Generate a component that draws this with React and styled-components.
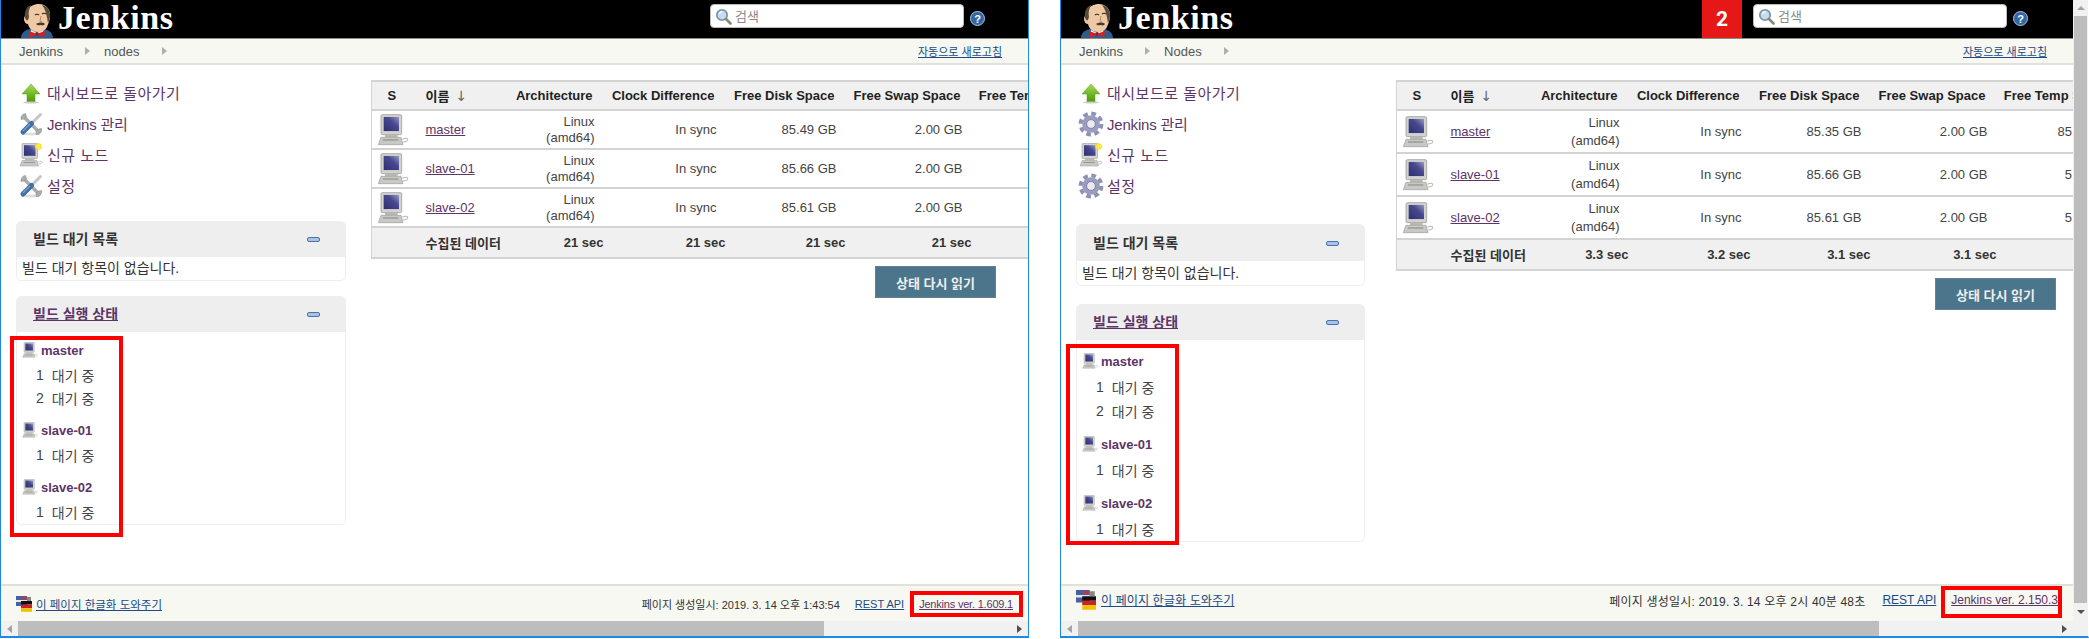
import React from 'react'
import styled, { createGlobalStyle } from 'styled-components'

const FONT = `"Liberation Sans", "Noto Sans CJK KR", Arial, sans-serif`

const GlobalStyle = createGlobalStyle`
  html, body {
    margin: 0;
    padding: 0;
    background: #fff;
  }
  body {
    font-family: ${FONT};
    color: #333;
  }
`

const Page = styled.div`
  display: flex;
  gap: 31px;
  width: 2089px;
  height: 639px;
  overflow: hidden;
`

const Window = styled.div`
  position: relative;
  display: flex;
  flex-direction: column;
  box-sizing: border-box;
  flex: none;
  width: 1029px;
  height: 638px;
  border-left: 1.5px solid #1e88e5;
  border-right: ${p => (p.$edge ? '1.5px solid #1e88e5' : '1px solid #fff')};
  border-bottom: 2px solid #1e88e5;
`

const Viewport = styled.div`
  flex: 1;
  min-height: 0;
  display: flex;
`

const Pane = styled.div`
  flex: 1;
  min-width: 0;
  display: flex;
  flex-direction: column;
`

const Header = styled.header`
  flex: none;
  height: 38px;
  background: #000;
  border-bottom: 1px solid #8c8c84;
  display: flex;
  align-items: stretch;
  overflow: hidden;
`

const Logo = styled.div`
  display: flex;
  align-items: flex-end;
  padding-left: 19px;
  margin-right: auto;
`

const LogoText = styled.span`
  font-family: "Liberation Serif", serif;
  font-weight: 700;
  font-size: 34px;
  letter-spacing: 0.6px;
  line-height: 35px;
  color: #fff;
  align-self: flex-start;
  margin-left: 4px;
`

const Badge = styled.div`
  width: 40px;
  margin-right: 11px;
  background: #e51717;
  color: #fff;
  font-family: Roboto, sans-serif;
  font-weight: 700;
  font-size: 21px;
  display: flex;
  align-items: center;
  justify-content: center;
`

const SearchBox = styled.div`
  box-sizing: border-box;
  width: 254px;
  height: 24px;
  margin-top: 4px;
  padding: 0 4px;
  background: #fff;
  border: 1px solid #bbb;
  border-radius: 4px;
  display: flex;
  align-items: center;
  gap: 3px;
`

const SearchInput = styled.input`
  flex: 1;
  min-width: 0;
  border: 0;
  outline: 0;
  padding: 0;
  background: transparent;
  font-family: ${FONT};
  font-size: 13px;
  &::placeholder {
    color: #8a8a8a;
    opacity: 1;
  }
`

const HelpWrap = styled.div`
  display: flex;
  align-items: center;
  margin: 0 ${p => p.$right}px 2px 6px;
`

const Breadcrumbs = styled.nav`
  flex: none;
  height: 24px;
  padding: 0 26px 0 18px;
  background: #f6f8f1;
  border-bottom: 2px solid #dfe1da;
  display: flex;
  align-items: center;
  font-size: 13px;
  color: #555;
`

const Crumb = styled.span`
  margin-right: 22px;
`

const CrumbArrow = styled.i`
  width: 0;
  height: 0;
  margin-right: 14px;
  border-left: 5px solid #aeb0aa;
  border-top: 4px solid transparent;
  border-bottom: 4px solid transparent;
`

const RefreshLink = styled.a`
  margin-left: auto;
  font-size: 11px;
  color: #204a87;
  text-decoration: underline;
`

const Main = styled.main`
  flex: 1;
  min-height: 0;
  display: flex;
`

const Sidebar = styled.aside`
  flex: none;
  box-sizing: content-box;
  width: ${p => p.$width}px;
  padding: 12px 0 0 15px;
`

const Tasks = styled.ul`
  list-style: none;
  margin: 0;
  padding: 0 0 0 3px;
`

const Task = styled.li`
  height: 31px;
  display: flex;
  align-items: center;
  gap: 4px;
  font-size: 15px;
  letter-spacing: ${p => (p.$tight ? '-0.2px' : '0.5px')};
  color: #5c3566;
`

const Panel = styled.section`
  box-sizing: border-box;
  margin-top: ${p => p.$top}px;
  border: 1px solid #eee;
  border-radius: 5px;
  overflow: hidden;
`

const PanelHead = styled.div`
  box-sizing: border-box;
  height: ${p => p.$height}px;
  padding: 0 25px 3px 16px;
  background: #eee;
  display: flex;
  align-items: center;
  justify-content: space-between;
  font-size: 14px;
  font-weight: 700;
`

const PanelTitle = styled.span`
  color: ${p => (p.$link ? '#5c3566' : '#333')};
  text-decoration: ${p => (p.$link ? 'underline' : 'none')};
`

const Collapse = styled.i`
  box-sizing: border-box;
  width: 13px;
  height: 5px;
  margin-top: 3px;
  border: 1px solid #4a72ad;
  border-radius: 2px;
  background: #a9c2e6;
`

const EmptyNote = styled.div`
  box-sizing: border-box;
  height: ${p => p.$height}px;
  padding: 0 0 3px 5px;
  display: flex;
  align-items: center;
  font-size: 14px;
`

const Executors = styled.div`
  padding: ${p => (p.$roomy ? 9 : 6)}px 0 ${p => (p.$roomy ? 0 : 1)}px 5px;
`

const NodeGroup = styled.div`
  & + & {
    margin-top: ${p => (p.$roomy ? 9 : 8)}px;
  }
`

const NodeName = styled.div`
  height: 24px;
  margin-bottom: ${p => (p.$roomy ? 2 : 1)}px;
  display: flex;
  align-items: center;
  gap: 3px;
  font-size: 13px;
  font-weight: 700;
  color: #5c3566;
`

const ExecRow = styled.div`
  height: ${p => (p.$roomy ? 24 : 23)}px;
  padding-left: 14px;
  display: flex;
  align-items: center;
  gap: 8px;
  font-size: 14px;
  color: #444;
`

const Content = styled.div`
  flex: 1;
  min-width: 0;
  margin-left: ${p => p.$gap}px;
  padding-top: 15px;
  overflow: hidden;
`

const NodeTable = styled.table`
  table-layout: fixed;
  width: 726px;
  border-collapse: collapse;
  border-top: 2px solid #d3d3d3;
  border-left: 1px solid #d3d3d3;
  font-size: 13px;
  color: #444;
`

const Col = styled.col`
  width: ${p => p.$width}px;
`

const HeadRow = styled.tr`
  height: 29px;
  background: #f0f0f0;
  border-bottom: 2px solid #d3d3d3;
`

const HeadCell = styled.th`
  padding: 0 ${p => (p.$center ? 4 : 12)}px 0 ${p => (p.$left ? 10 : 0)}px;
  text-align: ${p => (p.$center ? 'center' : p.$left ? 'left' : 'right')};
  font-weight: 700;
  font-size: 13px;
  color: #222;
  white-space: nowrap;
`

const SortArrow = styled.span`
  margin-left: 6px;
  font-family: "DejaVu Sans", sans-serif;
  font-size: 14px;
  font-weight: 400;
  color: #666;
`

const BodyRow = styled.tr`
  height: ${p => p.$height}px;
  border-bottom: 2px solid #d3d3d3;
`

const Cell = styled.td`
  padding: 0 10px;
  text-align: ${p => (p.$left ? 'left' : 'right')};
  line-height: ${p => p.$lh || 16}px;
  white-space: nowrap;
`

const IconCell = styled.td`
  padding: 0;
  text-align: left;
  & > svg {
    display: block;
    margin-left: 5px;
  }
`

const NodeLink = styled.a`
  color: #5c3566;
  text-decoration: underline;
`

const TotalRow = styled.tr`
  height: 31px;
  background: #f0f0f0;
  border-bottom: 2px solid #d3d3d3;
`

const TotalCell = styled.td`
  padding: 0 ${p => (p.$left ? 0 : 1)}px 0 ${p => (p.$left ? 10 : 0)}px;
  text-align: ${p => (p.$left ? 'left' : 'right')};
  font-size: 13px;
  font-weight: 700;
  color: #333;
  white-space: nowrap;
`

const ButtonRow = styled.div`
  display: flex;
  justify-content: flex-end;
  padding: 7px ${p => p.$right}px 0 0;
`

const RefreshButton = styled.button`
  width: 121px;
  height: 32px;
  border: 1px solid #5f8299;
  background: #4b758b;
  color: #eee;
  font-family: ${FONT};
  font-size: 13px;
  font-weight: 700;
  padding: 0;
`

const Footer = styled.footer`
  flex: none;
  box-sizing: border-box;
  height: 37px;
  padding: 0 15px ${p => (p.$large ? 7 : 0)}px 15px;
  background: #f6f8f1;
  border-top: 2px solid #dfe1da;
  display: flex;
  align-items: center;
  gap: 15px;
  font-size: ${p => (p.$large ? 12 : 11)}px;
`

const Translate = styled.a`
  margin-right: auto;
  display: flex;
  align-items: center;
  gap: ${p => (p.$large ? 5 : 4)}px;
  font-size: ${p => (p.$large ? 12.2 : 11.5)}px;
  color: #204a87;
  text-decoration: underline;
`

const FooterDate = styled.span`
  margin-right: ${p => (p.$large ? 2 : 0)}px;
  letter-spacing: ${p => (p.$large ? '0.2px' : '0')};
`

const FooterLink = styled.a`
  color: ${p => (p.$visited ? '#5c3566' : '#204a87')};
  letter-spacing: ${p => (p.$tight ? '-0.2px' : '0')};
  text-decoration: underline;
`

const HScroll = styled.div`
  flex: none;
  height: 15px;
  padding-right: ${p => p.$corner}px;
  background: #f1f1f1;
  display: flex;
  align-items: stretch;
`

const ScrollButton = styled.div`
  flex: none;
  width: 17px;
  display: flex;
  align-items: center;
  justify-content: center;
`

const ArrowLeft = styled.i`
  width: 0;
  height: 0;
  border-right: 5px solid ${p => (p.$dim ? '#a3a3a3' : '#505050')};
  border-top: 4px solid transparent;
  border-bottom: 4px solid transparent;
`

const ArrowRight = styled.i`
  width: 0;
  height: 0;
  border-left: 5px solid #505050;
  border-top: 4px solid transparent;
  border-bottom: 4px solid transparent;
`

const Track = styled.div`
  flex: 1;
  display: flex;
`

const Thumb = styled.div`
  width: ${p => p.$size}px;
  background: #bdbdbd;
`

const VScroll = styled.div`
  flex: none;
  width: 15px;
  background: #f1f1f1;
  display: flex;
  flex-direction: column;
  align-items: center;
`

const VButton = styled.div`
  flex: none;
  height: ${p => p.$height}px;
  display: flex;
  align-items: center;
  justify-content: center;
`

const ArrowUpGlyph = styled.i`
  width: 0;
  height: 0;
  border-bottom: 4px solid #a3a3a3;
  border-left: 4px solid transparent;
  border-right: 4px solid transparent;
`

const ArrowDownGlyph = styled.i`
  width: 0;
  height: 0;
  border-top: 4px solid #505050;
  border-left: 4px solid transparent;
  border-right: 4px solid transparent;
`

const VThumb = styled.div`
  flex: 1;
  width: 13px;
  background: #bdbdbd;
`

/* annotation frames drawn over the screenshot */
const RedFrame = styled.div`
  position: absolute;
  box-sizing: border-box;
  left: ${p => p.$x}px;
  top: ${p => p.$y}px;
  width: ${p => p.$w}px;
  height: ${p => p.$h}px;
  border: 4px solid #f00;
  pointer-events: none;
`

function Butler () {
  return (
    <svg width='34' height='35' viewBox='0 0 34 35' style={{ display: 'block' }}>
      <path d='M1 35c0-5 4-8 9-9l7 2 7-2c5 1 9 4 9 9z' fill='#2d5c8f' />
      <path d='M11 27l6 3 6-3 1 5H10z' fill='#f4f4f0' />
      <path d='M9 28l7 2.5v1L10 35zM25 28l-7 2.5v1L24 35z' fill='#d5201f' />
      <circle cx='17' cy='31' r='1.8' fill='#a81515' />
      <path d='M8 8C9 3 14 1 19 1c6 0 11 4 11 11 0 6-2 9-3 12-2 4-6 5-9 5-5 0-9-3-10-8-2 0-4-2-4-5 0-2 1-4 3-4z' fill='#efc9a4' />
      <path d='M5 15c-1-6 1-11 6-13 -2 4-3 8-2 12l-1 3c-1 1-2 0-3-2zM22 2c5 1 8 5 8 10 0 3-1 6-2 8-1-6-2-13-6-18z' fill='#5a4a3c' />
      <path d='M16 21c3-2 7-2 9 0-1 1-2 2-4 1-2 0-3 1-5-1z' fill='#4a3a2c' />
      <path d='M15 12c1-1 3-1 4 0M22 11c1-1 3-1 4 0' stroke='#3a2a1c' strokeWidth='1.2' fill='none' />
      <path d='M21 13l-1 5 2 1' stroke='#b98a66' strokeWidth='1' fill='none' />
    </svg>
  )
}

function SearchIcon () {
  return (
    <svg width='17' height='17' viewBox='0 0 17 17'>
      <circle cx='7' cy='7' r='5.2' fill='#c6dcef' stroke='#7f96a8' strokeWidth='1.8' />
      <path d='M4.5 6a3 3 0 0 1 3-2.5' stroke='#fff' strokeWidth='1.2' fill='none' />
      <path d='M11 11l4.5 4.5' stroke='#8a8678' strokeWidth='2.6' strokeLinecap='round' />
    </svg>
  )
}

function HelpIcon () {
  return (
    <svg width='15' height='15' viewBox='0 0 15 15'>
      <circle cx='7.5' cy='7.5' r='7' fill='#3465a4' stroke='#a9c2e6' strokeWidth='1' />
      <text x='7.5' y='11.5' textAnchor='middle' fontSize='11' fontWeight='700' fontFamily='Liberation Sans, sans-serif' fill='#fff'>?</text>
    </svg>
  )
}

function UpArrowIcon () {
  return (
    <svg width='24' height='24' viewBox='0 0 24 24' style={{ flex: 'none' }}>
      <defs>
        <linearGradient id='upGreen' x1='0' y1='0' x2='0' y2='1'>
          <stop offset='0' stopColor='#a6dd55' />
          <stop offset='1' stopColor='#4a9a06' />
        </linearGradient>
      </defs>
      <path d='M12 3L3 13h5v8h8v-8h5z' fill='url(#upGreen)' stroke='#5a9a1a' strokeWidth='0.5' />
      <ellipse cx='12' cy='21.5' rx='8' ry='1' fill='#ccc' />
    </svg>
  )
}

function ToolsIcon () {
  return (
    <svg width='24' height='24' viewBox='0 0 24 24' style={{ flex: 'none' }}>
      <ellipse cx='12' cy='22' rx='10' ry='1.4' fill='#ddd' />
      <path d='M5 5l14 14' stroke='#a9adab' strokeWidth='3.6' />
      <path d='M6.5 1.5A5 5 0 0 0 2 7.5l3-.5 2.5-2.5zM17 22.5a5 5 0 0 0 5.6-6L19.5 17 17 19.5z' fill='#a9adab' stroke='#888' strokeWidth='0.5' />
      <path d='M21.5 2.5L14 10' stroke='#c4c7c5' strokeWidth='3' strokeLinecap='round' />
      <path d='M12.5 11.5L4 20' stroke='#3f6ea8' strokeWidth='5' strokeLinecap='round' />
      <path d='M11 12L4 19' stroke='#7ba0cd' strokeWidth='1.2' />
    </svg>
  )
}

function GearIcon () {
  return (
    <svg width='26' height='26' viewBox='0 0 26 26' style={{ flex: 'none', marginLeft: '-1px', marginRight: '-1px' }}>
      <circle cx='13' cy='13' r='10.4' fill='none' stroke='#8e90b4' strokeWidth='4' strokeDasharray='4.6 3.57' />
      <circle cx='13' cy='13' r='8.8' fill='#9a9cbf' />
      <circle cx='13' cy='13' r='4.4' fill='#eceaf0' stroke='#74769a' strokeWidth='0.8' />
    </svg>
  )
}

function ComputerIcon ({ size = 24, star }) {
  return (
    <svg width={size} height={size} viewBox='0 0 24 24' style={{ flex: 'none' }}>
      <defs>
        <linearGradient id='pcScreen' x1='0' y1='1' x2='1' y2='0'>
          <stop offset='0' stopColor='#2e2e72' />
          <stop offset='0.6' stopColor='#48488f' />
          <stop offset='1' stopColor='#9a9abf' />
        </linearGradient>
      </defs>
      <rect x='3' y='0.5' width='15.5' height='15' rx='1' fill='#d2d3cf' stroke='#9b9d98' strokeWidth='0.6' />
      <rect x='5' y='2.2' width='11.5' height='10.6' fill='url(#pcScreen)' />
      <rect x='6' y='15.5' width='9.5' height='2' fill='#b8bab5' />
      <path d='M3 17.5h15l1.5 5.5H1z' fill='#c8c9c4' stroke='#9b9d98' strokeWidth='0.5' />
      <path d='M4.5 19.5h11.5' stroke='#90928d' strokeWidth='0.9' />
      <path d='M19 19c2-1 3.5-1 4 0s-1 2-3.5 2' stroke='#b8bab5' strokeWidth='0.8' fill='none' />
      {star && <circle cx='19.5' cy='3.5' r='3' fill='#fce94f' stroke='#edd400' strokeWidth='0.6' />}
    </svg>
  )
}

function FlagIcon ({ size }) {
  return (
    <svg width={size} height={size} viewBox='0 0 16 16' style={{ flex: 'none' }}>
      <rect x='0' y='0' width='11' height='10' fill='#4a5f9e' />
      <rect x='0' y='4' width='11' height='2' fill='#e8e8e8' />
      <rect x='6' y='1' width='5' height='2' fill='#cc3333' />
      <rect x='5' y='5' width='11' height='3.6' fill='#111' />
      <rect x='5' y='8.6' width='11' height='3.6' fill='#cc2222' />
      <rect x='5' y='12.2' width='11' height='3.6' fill='#f2c200' />
      <rect x='11' y='1' width='4' height='4' fill='#888' />
    </svg>
  )
}

function NodeRow ({ name, disk, temp, height, lh }) {
  return (
    <BodyRow $height={height}>
      <IconCell><ComputerIcon size={32} /></IconCell>
      <Cell $left><NodeLink>{name}</NodeLink></Cell>
      <Cell $lh={lh}>Linux<br />(amd64)</Cell>
      <Cell>In sync</Cell>
      <Cell>{disk}</Cell>
      <Cell>2.00 GB</Cell>
      <Cell>{temp}</Cell>
    </BodyRow>
  )
}

function NodesTable ({ nodes, times, rowHeight, lineHeight }) {
  return (
    <NodeTable>
      <colgroup>
        {[44, 90, 99, 122, 120, 126, 125].map(w => <Col key={w} $width={w} />)}
      </colgroup>
      <thead>
        <HeadRow>
          <HeadCell $center>S</HeadCell>
          <HeadCell $left>이름<SortArrow>↓</SortArrow></HeadCell>
          <HeadCell>Architecture</HeadCell>
          <HeadCell>Clock Difference</HeadCell>
          <HeadCell>Free Disk Space</HeadCell>
          <HeadCell>Free Swap Space</HeadCell>
          <HeadCell>Free Temp Space</HeadCell>
        </HeadRow>
      </thead>
      <tbody>
        {nodes.map(n => (
          <NodeRow key={n.name} {...n} height={rowHeight} lh={lineHeight} />
        ))}
        <TotalRow>
          <TotalCell />
          <TotalCell $left>수집된 데이터</TotalCell>
          {times.map((t, i) => <TotalCell key={i}>{t}</TotalCell>)}
          <TotalCell>{times[0]}</TotalCell>
        </TotalRow>
      </tbody>
    </NodeTable>
  )
}

function ExecutorPanel ({ roomy }) {
  const groups = [
    { name: 'master', slots: [1, 2] },
    { name: 'slave-01', slots: [1] },
    { name: 'slave-02', slots: [1] }
  ]

  return (
    <Executors $roomy={roomy}>
      {groups.map(g => (
        <NodeGroup key={g.name} $roomy={roomy}>
          <NodeName $roomy={roomy}><ComputerIcon size={16} />{g.name}</NodeName>
          {g.slots.map(s => (
            <ExecRow key={s} $roomy={roomy}><span>{s}</span><span>대기 중</span></ExecRow>
          ))}
        </NodeGroup>
      ))}
    </Executors>
  )
}

function JenkinsWindow ({ v2 }) {
  const nodes = v2
    ? [
        { name: 'master', disk: '85.35 GB', temp: '85.35 GB' },
        { name: 'slave-01', disk: '85.66 GB', temp: '5.66 GB' },
        { name: 'slave-02', disk: '85.61 GB', temp: '5.61 GB' }
      ]
    : [
        { name: 'master', disk: '85.49 GB', temp: '85.49 GB' },
        { name: 'slave-01', disk: '85.66 GB', temp: '85.66 GB' },
        { name: 'slave-02', disk: '85.61 GB', temp: '85.61 GB' }
      ]
  const ManageIcon = v2 ? GearIcon : ToolsIcon

  return (
    <Window $edge={!v2}>
      <Viewport>
        <Pane>
          <Header>
            <Logo>
              <Butler />
              <LogoText>Jenkins</LogoText>
            </Logo>
            {v2 && <Badge>2</Badge>}
            <SearchBox>
              <SearchIcon />
              <SearchInput placeholder='검색' readOnly />
            </SearchBox>
            <HelpWrap $right={v2 ? 45 : 43}><HelpIcon /></HelpWrap>
          </Header>

          <Breadcrumbs>
            <Crumb>Jenkins</Crumb>
            <CrumbArrow />
            <Crumb>{v2 ? 'Nodes' : 'nodes'}</Crumb>
            <CrumbArrow />
            <RefreshLink>자동으로 새로고침</RefreshLink>
          </Breadcrumbs>

          <Main>
            <Sidebar $width={v2 ? 289 : 330}>
              <Tasks>
                <Task><UpArrowIcon />대시보드로 돌아가기</Task>
                <Task $tight><ManageIcon />Jenkins 관리</Task>
                <Task><ComputerIcon star />신규 노드</Task>
                <Task><ManageIcon />설정</Task>
              </Tasks>

              <Panel $top={v2 ? 23 : 20}>
                <PanelHead $height={v2 ? 36 : 35}>
                  <PanelTitle>빌드 대기 목록</PanelTitle>
                  <Collapse />
                </PanelHead>
                <EmptyNote $height={v2 ? 24 : 23}>빌드 대기 항목이 없습니다.</EmptyNote>
              </Panel>

              <Panel $top={v2 ? 18 : 15}>
                <PanelHead $height={35}>
                  <PanelTitle $link>빌드 실행 상태</PanelTitle>
                  <Collapse />
                </PanelHead>
                <ExecutorPanel roomy={v2} />
              </Panel>
            </Sidebar>

            <Content $gap={v2 ? 31 : 25}>
              <NodesTable
                nodes={nodes}
                times={v2 ? ['3.3 sec', '3.2 sec', '3.1 sec', '3.1 sec'] : ['21 sec', '21 sec', '21 sec', '21 sec']}
                rowHeight={v2 ? 43 : 39}
                lineHeight={v2 ? 18 : 16}
              />
              <ButtonRow $right={v2 ? 17 : 32}>
                <RefreshButton>상태 다시 읽기</RefreshButton>
              </ButtonRow>
            </Content>
          </Main>

          <Footer $large={v2}>
            <Translate $large={v2}><FlagIcon size={v2 ? 20 : 16} />이 페이지 한글화 도와주기</Translate>
            <FooterDate $large={v2}>{v2 ? '페이지 생성일시: 2019. 3. 14 오후 2시 40분 48초' : '페이지 생성일시: 2019. 3. 14 오후 1:43:54'}</FooterDate>
            <FooterLink>REST API</FooterLink>
            <FooterLink $visited $tight={!v2}>Jenkins ver. {v2 ? '2.150.3' : '1.609.1'}</FooterLink>
          </Footer>
        </Pane>

        {v2 && (
          <VScroll>
            <VButton $height={16}><ArrowUpGlyph /></VButton>
            <VThumb />
            <VButton $height={18}><ArrowDownGlyph /></VButton>
          </VScroll>
        )}
      </Viewport>

      <HScroll $corner={v2 ? 15 : 0}>
        <ScrollButton><ArrowLeft $dim /></ScrollButton>
        <Track><Thumb $size={v2 ? 801 : 806} /></Track>
        <ScrollButton><ArrowRight /></ScrollButton>
      </HScroll>

      {v2
        ? (
          <>
            <RedFrame $x={5} $y={344} $w={113} $h={201} />
            <RedFrame $x={880} $y={586} $w={121} $h={32} />
          </>
          )
        : (
          <>
            <RedFrame $x={9} $y={336} $w={113} $h={201} />
            <RedFrame $x={909} $y={591} $w={113} $h={26} />
          </>
          )}
    </Window>
  )
}

export default function App () {
  return (
    <Page>
      <GlobalStyle />
      <JenkinsWindow />
      <JenkinsWindow v2 />
    </Page>
  )
}
